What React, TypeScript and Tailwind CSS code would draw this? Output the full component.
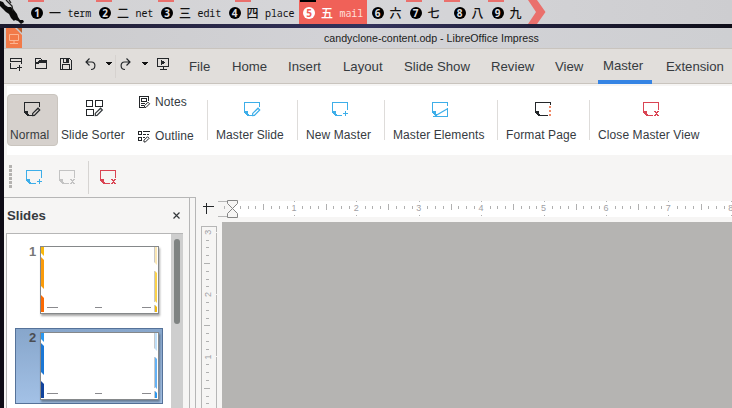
import React from "react";

type P = { className?: string };

const Pencil = ({ color = "currentColor" }: { color?: string }) => (
  <path d="M8.7 13.6V11.4L14 6.200L15.700 7.900L10.400 13.400Z" fill="none" stroke={color} strokeWidth="1.25" shapeRendering="auto" />
);

function SlideIcon({ kind, className = "" }: P & { kind: "edit" | "plus" | "x" | "elements" | "format" }) {
  return (
    <svg className={"block shrink-0 " + className} width="17" height="15" viewBox="0 0 17 15" shapeRendering="crispEdges" fill="currentColor">
      <path d="M0 0H16V1H0ZM0 0H1V11H0Z" />
      <path d="M0 9H4V12H5V14H3V13H2V12H1V11H0Z" />
      {kind !== "elements" && <rect x="5" y="13" width={kind === "format" ? 8 : 3.5} height="1" />}
      {kind === "edit" && (<><rect x="15" y="0" width="1" height="5" /><Pencil /></>)}
      {kind === "plus" && (<><path d="M15 0H16V8H15ZM5 13H10V14H5Z" /><path d="M13 9H14V14H13ZM11 11H16V12H11Z" /></>)}
      {kind === "x" && (<><path d="M15 0H16V8H15ZM5 13H10V14H5Z" /><path d="M11 9H13V10H14V9H16V10H15V11H14V12H15V13H16V14H14V13H13V14H11V13H12V12H13V11H12V10H11Z" /></>)}
      {kind === "elements" && (<><path d="M15 0H16V4H15ZM15 6H16V15H15ZM1 14H16V15H1Z" /><path d="M3 14L15.500 6.800" fill="none" stroke="currentColor" strokeWidth="1.200" shapeRendering="auto" /></>)}
      {kind === "format" && (<><rect x="15" y="0" width="1" height="3" /><path fill="#f08a68" d="M14 4H16V6H14ZM14 8H16V10H14ZM14 12H16V14H14Z" /></>)}
    </svg>
  );
}

function SorterIcon() {
  return (
    <svg className="ml-[25px] block" width="18" height="17" viewBox="0 0 18 17" fill="none" stroke="#232629" shapeRendering="crispEdges">
      <path d="M.5 .5H6.500V6.500H.5ZM9.500 .5H16.500V6.500H9.500ZM.5 9.500H7.500V15.500H.5Z" />
      <g transform="translate(.6 2)"><Pencil /></g>
    </svg>
  );
}

function NotesIcon() {
  return (
    <svg className="ml-[1px] block shrink-0" width="12" height="13" viewBox="0 0 12 13" fill="none" stroke="#232629" shapeRendering="crispEdges">
      <path d="M5 11.500H.5V.5H9.500V5M2.500 2.500H7.500V5.500H2.500ZM2 7.500H6M2 9.500H5" />
      <path d="M5.500 11.500V9.700L9 6.200L10.600 7.800L7 11.400Z" shapeRendering="auto" />
    </svg>
  );
}

function OutlineIcon() {
  return (
    <svg className="block shrink-0" width="13" height="13" viewBox="0 0 13 13" fill="none" stroke="#232629" shapeRendering="crispEdges">
      <path d="M.5 1.500H3.500V4.500H.5ZM.5 7.500H3.500V10.500H.5ZM5 1.500H12M5 4.500H8M9 4.500H11M5 7.500H7" />
      <path d="M6 12V10.200L9.500 6.700L11.100 8.300L7.500 11.900Z" shapeRendering="auto" />
    </svg>
  );
}

function QuickIcons() {
  return (
    <svg className="block h-[34px] w-[178px] shrink-0" viewBox="4 49 178 34" fill="none" stroke="#232629" shapeRendering="crispEdges">
      <path d="M10.500 58.500H21.500V61.500H10.500ZM10.500 63V68.500H17M21.500 62V64M19.500 65V71M17 67.500H22" />
      <path d="M35.500 58.500H40.500L42.500 60.500H46.500V68.500H35.500Z" />
      <path d="M36 62H38L39 60H47V63H39L38 64H36Z" fill="#232629" stroke="none" />
      <path d="M60.500 58.500H69.500L71.500 60.500V69.500H60.500ZM62.500 69V64.500H69.500V69M63.500 59V62.500H68.500V59" />
      <path d="M66 59H68V62H66Z" fill="#232629" stroke="none" />
      <g shapeRendering="auto" strokeWidth="1.150">
        <path d="M89.500 58.500L86 62L89.500 65.500M86.500 62H91.500C96.200 62 96 69.500 91 69.500" />
        <path d="M126.500 58.500L130 62L126.500 65.500M129.500 62H124.500C119.800 62 120 69.500 125 69.500" />
      </g>
      <path d="M106 62H112V63H111V64H110V65H108V64H107V63H106ZM142 62H148V63H147V64H146V65H144V64H143V63H142Z" fill="#111" stroke="none" />
      <path d="M115.500 55V78" stroke="#d6d2cf" />
      <path d="M157.500 58.500H168.500V66.500H157.500ZM163 67V69M160 69.500H167" />
      <path d="M161 60L165.500 62.500L161 65Z" fill="#232629" stroke="none" />
    </svg>
  );
}

const spaces = [
  { n: 1, k: "一", name: "term", cls: "w-[68px]" },
  { n: 2, k: "二", name: "net", cls: "w-[62px]" },
  { n: 3, k: "三", name: "edit", cls: "w-[67.500px]" },
  { n: 4, k: "四", name: "place", cls: "w-[70.500px]" },
];
const restSpaces = [
  { n: 6, k: "六", cls: "w-[38px]" },
  { n: 7, k: "七", cls: "w-[44px]" },
  { n: 8, k: "八", cls: "w-[38px]" },
  { n: 9, k: "九", cls: "w-[30px]" },
];

function Space({ n, k, name, cls, active }: { n: number; k: string; name?: string; cls: string; active?: boolean }) {
  return (
    <div className={"flex h-[24px] shrink-0 items-center pt-[2px] text-[10px] " + cls + (active ? " bg-[#f06158] text-white" : " text-[#111]")}>
      <span className={"flex h-[12px] w-[12px] shrink-0 items-center justify-center rounded-full font-['Open_Sans',sans-serif] text-[10px] leading-none font-bold " + (active ? "bg-white text-[#f06158]" : "bg-black text-[#dedee0]")}>{n}</span>
      <span className="ml-[6px] w-[13px] shrink-0 font-['Noto_Sans_CJK_JP',sans-serif] text-[12px] leading-none font-medium">{k}</span>
      {name && <span className={"ml-[5.500px] font-['Noto_Sans_Mono','DejaVu_Sans_Mono',monospace] text-[10px] tracking-[-0.120px]" + (active ? " text-[#ffe0dc]" : "")}>{name}</span>}
    </div>
  );
}

const tabs = [
  { t: "File", cls: "ml-[7px] w-[43px]" },
  { t: "Home", cls: "w-[56px]" },
  { t: "Insert", cls: "w-[55px]" },
  { t: "Layout", cls: "w-[61px]" },
  { t: "Slide Show", cls: "w-[87px]" },
  { t: "Review", cls: "w-[64px]" },
  { t: "View", cls: "w-[43px]" },
];

function Divider() {
  return <div className="mt-[14px] h-[40px] w-px shrink-0 bg-[#dedcda]" />;
}

function Command({ label, kind, cls, icon }: { label: string; kind: "edit" | "plus" | "x" | "elements" | "format"; cls: string; icon: string }) {
  return (
    <div className={"shrink-0 pt-[16px] pl-[8px] whitespace-nowrap " + cls}>
      <SlideIcon kind={kind} className={icon} />
      <div className="mt-[11px] text-[12px] leading-[14px] tracking-[0.100px]">{label}</div>
    </div>
  );
}

function Thumb({ c }: { c: string[] }) {
  return (
    <svg className="block shadow-[1px_2px_2px_rgba(0,0,0,0.35)]" width="119" height="68" viewBox="0 0 119 68">
      <rect x=".5" y=".5" width="118" height="67" fill="#fff" stroke="#85888a" />
      <path d="M1 1H4V10L1 7Z" fill={c[0]} />
      <path d="M1 11L4 14V43L1 40Z" fill={c[1]} />
      <path d="M1 49L4 52V66H1Z" fill={c[2]} />
      <path d="M115 1H117V19L115 17Z" fill={c[3]} />
      <path d="M114 1H115V17L114 16ZM114 25H115V56H114ZM114 59H115V66H114Z" fill="#c8c8ca" />
      <path d="M115 25L117 27V57L115 55Z" fill={c[4]} />
      <path d="M115 59L117 61V66H115Z" fill={c[5]} />
      <path d="M7 61.500H18M55 61.500H62M102 61.500H111" stroke="#8a8a8e" />
    </svg>
  );
}

function HRuler() {
  const ticks = Array.from({ length: 65 }, (_, i) => i).filter((i) => i % 8 !== 0);
  return (
    <svg className="block h-[25px] w-[536px]" viewBox="196 197 536 25" shapeRendering="crispEdges">
      <path d="M232 201H732V217H232Z" fill="#fff" />
      <path d="M218 201H236V202H218ZM218 216H236V217H218ZM224 206H225V209H224Z" fill="#b6b6b6" />
      <path d="M203 206H214V207H203ZM206 203H207V214H206Z" fill="#232629" />
      {ticks.map((i) => {
        const x = Math.floor(232.400 + i * 7.810);
        return <rect key={i} x={x} y={i % 4 === 0 ? 204 : 206} width="1" height={i % 4 === 0 ? 6 : 3} fill="#b0b0b0" />;
      })}
      {[1, 2, 3, 4, 5, 6, 7, 8].map((n) => (
        <g key={n}>
          <path d={`M${Math.floor(232 + n * 62.400)} 201h1v1h-1ZM${Math.floor(232 + n * 62.400)} 215h1v1h-1Z`} fill="#b0b0b0" />
          <text x={231.500 + n * 62.400} y="211" textAnchor="middle" fontSize="9" fill="#a0a0a4" fontFamily="Liberation Sans, sans-serif">{n}</text>
        </g>
      ))}
      <path d="M227.500 200.500H237.500V203.500L232.500 208.500L227.500 203.500ZM232.500 208.500L237.500 213.500V217.500H227.500V213.500Z" fill="#f6f5f4" stroke="#858585" shapeRendering="auto" />
    </svg>
  );
}

function VRuler() {
  const ticks = Array.from({ length: 24 }, (_, i) => i + 1).filter((i) => i % 8 !== 0);
  return (
    <svg className="block h-[186px] w-[26px] shrink-0" viewBox="196 222 26 186" shapeRendering="crispEdges">
      <path d="M201 226H217V227H201ZM201 226H202V408H201ZM216 226H217V408H216Z" fill="#b6b6b6" />
      {ticks.map((i) => (
        <rect key={i} x={i % 4 === 0 ? 204 : 206} y={Math.floor(232.200 + i * 7.800)} width={i % 4 === 0 ? 6 : 3} height="1" fill="#b0b0b0" />
      ))}
      {[3, 2, 1].map((n, i) => (
        <g key={n}>
          <rect x="215" y={Math.floor(232 + i * 62.400)} width="2" height="1" fill="#f6f5f4" />
          <text transform={`translate(211 ${232.200 + i * 62.400}) rotate(-90)`} textAnchor="middle" fontSize="9" fill="#a0a0a4" fontFamily="Liberation Sans, sans-serif">{n}</text>
        </g>
      ))}
    </svg>
  );
}

export default function App() {
  return (
    <div className="flex h-[408px] w-[732px] flex-col overflow-hidden bg-[#0e0c16] font-['Liberation_Sans',Arial,sans-serif] text-[#363b3f]">
      <header className="relative flex h-[24px] shrink-0 bg-gradient-to-r from-[#d2d2d4] via-[#d6d6d9] to-[#cdcdd0]">
        <svg className="block shrink-0" width="31" height="24" viewBox="0 0 31 24">
          <path d="M0 1L3 2L5 5L8 7L11 7L14 10L17 14L18 17L20 20H23L24 22L21 24L18 21L15 20L14 21L11 18L9 14L6 12L3 9L0 6Z" fill="#0b0b0b" />
          <path d="M6 0L9 3L12 6L13 11M9 0L11 3" fill="none" stroke="#222" strokeWidth="1.300" />
        </svg>
        {spaces.map((s) => <Space key={s.n} {...s} />)}
        <Space n={5} k="五" name="mail" cls="w-[68px] pl-[4px]" active />
        <div className="w-[4.500px] shrink-0" />
        {restSpaces.map((s) => <Space key={s.n} {...s} />)}
        <svg className="ml-[6px] block shrink-0" width="18" height="24" viewBox="0 0 18 24">
          <path d="M0 0H9L17.500 12L9 24H0L8 12Z" fill="#ea706c" />
        </svg>
        <svg className="absolute top-0 left-0" width="732" height="2" viewBox="0 0 732 2">
          <path d="M28 0H44V2H28ZM96 0H112V2H96ZM158 0H174V2H158ZM235 0H251V2H235ZM406 0H422V2H406ZM444 0H460V2H444ZM488 0H504V2H488Z" fill="#ea706c" />
          <path d="M300 0H316V2H300Z" fill="#000" />
        </svg>
      </header>
      <div className="h-[4px] shrink-0 bg-gradient-to-r from-[#1c1a2d] via-[#33325c] to-[#0e0d18]" />

      <div className="ml-[4px] flex min-h-0 flex-1 flex-col bg-[#f6f5f4]">
        <div className="flex h-[20px] shrink-0 bg-gradient-to-r from-[#cbcbcd] via-[#d3d3d7] to-[#cecfd2]">
          <svg className="ml-[2px] block shrink-0" width="16" height="20" viewBox="0 0 16 20">
            <path d="M0 0H9L16 7V20H0Z" fill="#f27a48" />
            <path d="M11 0H16V5Z" fill="#bd622f" />
            <path d="M3.500 6.500H12.500V12.500H3.500ZM8 13V15M4 15.500H12" fill="none" stroke="#fbb592" />
          </svg>
          <div className="ml-[302px] pt-[4px] text-[10.670px] leading-[13px] whitespace-nowrap text-[#1c1c1c]">candyclone-content.odp - LibreOffice Impress</div>
        </div>

        <nav className="flex h-[36px] shrink-0 border-y border-[#c9c4be] bg-[#e1dedb] text-[13.200px] leading-[16px] whitespace-nowrap">
          <QuickIcons />
          {tabs.map((t) => <div key={t.t} className={"shrink-0 pt-[10px] " + t.cls}>{t.t}</div>)}
          <div className="h-[35px] w-[54px] shrink-0 border-b-4 border-[#3584e4] pt-[9px] pl-[5px] text-left tracking-[-0.050px]">Master</div>
          <div className="shrink-0 pt-[10px] pl-[14px]">Extension</div>
        </nav>

        <section className="mt-[2px] ml-[3px] flex h-[69px] shrink-0 bg-white">
          <div className="mt-[8px] h-[52px] w-[51px] shrink-0 rounded-[4px] border border-[#cac5bf] bg-[#d6d1cd] pt-[7px] text-[#232629]">
            <SlideIcon kind="edit" className="ml-[16px]" />
            <div className="mt-[11px] pl-[2px] text-[12px] leading-[14px] tracking-[0.100px] text-[#363b3f]">Normal</div>
          </div>
          <div className="w-[71px] shrink-0 pt-[14px] pl-[3px]">
            <SorterIcon />
            <div className="mt-[11px] text-[12px] leading-[14px] whitespace-nowrap tracking-[0.100px]">Slide Sorter</div>
          </div>
          <div className="w-[71px] shrink-0 pt-[9px] pl-[9px] text-[12px] leading-[14px] tracking-[0.100px]">
            <div className="flex items-center gap-[4px]"><NotesIcon />Notes</div>
            <div className="mt-[20px] flex items-center gap-[4px]"><OutlineIcon />Outline</div>
          </div>
          <div className="ml-[7px]" />
          <Divider />
          <Command label="Master Slide" kind="edit" cls="w-[89px]" icon="ml-[28px] text-[#3daee9]" />
          <Divider />
          <Command label="New Master" kind="plus" cls="w-[86px]" icon="ml-[26px] text-[#3daee9]" />
          <Divider />
          <Command label="Master Elements" kind="elements" cls="w-[112px]" icon="ml-[39px] text-[#3daee9]" />
          <Divider />
          <Command label="Format Page" kind="format" cls="w-[91px]" icon="ml-[29px] text-[#232629]" />
          <Divider />
          <Command label="Close Master View" kind="x" cls="w-[140px]" icon="ml-[45px] text-[#da4453]" />
        </section>

        <section className="flex h-[42px] shrink-0 items-start">
          <svg className="mt-[10px] ml-[5px] block" width="3" height="23" viewBox="0 0 3 23" shapeRendering="crispEdges">
            <path d="M0 0H3V3H0ZM0 4H3V7H0ZM0 8H3V11H0ZM0 12H3V15H0ZM0 16H3V19H0ZM0 20H3V23H0Z" fill="#b4b2b0" />
          </svg>
          <SlideIcon kind="plus" className="mt-[15px] ml-[14px] text-[#3daee9]" />
          <SlideIcon kind="x" className="mt-[15px] ml-[16px] text-[#c3c3c3]" />
          <div className="mt-[6px] ml-[12px] h-[33px] w-px bg-[#d6d4d2]" />
          <SlideIcon kind="x" className="mt-[15px] ml-[11px] text-[#da4453]" />
        </section>

        <main className="flex min-h-0 flex-1">
          <aside className="flex w-[186px] shrink-0 flex-col border-t border-r border-[#b6b6b6]">
            <div className="flex h-[35px] shrink-0 items-center justify-between pr-[9px] pl-[3px] text-[13.200px] font-bold">
              <span>Slides</span>
              <svg width="7" height="7" viewBox="0 0 7 7" fill="none" stroke="#34383b" strokeWidth="1.200"><path d="M.5 .5L6.500 6.500M6.500 .5L.5 6.500" /></svg>
            </div>
            <div className="ml-[2px] flex min-h-0 w-[177px] flex-1 border-t border-l border-[#b6b6b6] bg-white">
              <div className="flex w-[164px] shrink-0 flex-col pl-[8px] text-[13px] leading-[12px] font-bold">
                <div className="mt-[12px] flex h-[68px] items-start">
                  <span className="w-[25px] shrink-0 pl-[14px] text-[#777]">1</span>
                  <Thumb c={["#f9b80c", "#fa9b0a", "#fb6a04", "#fbe7b4", "#fbd24a", "#f2b90d"]} />
                </div>
                <div className="mt-[14px] flex h-[76px] w-[148px] shrink-0 items-start border border-[#557299] bg-gradient-to-b from-[#87a6cb] to-[#a3c1e6] pt-[3px]">
                  <span className="w-[24px] shrink-0 pl-[13px] text-[#4b4d52]">2</span>
                  <Thumb c={["#2b98ef", "#1b77d5", "#11439c", "#bfe0fa", "#64b2f5", "#2b98ef"]} />
                </div>
              </div>
              <div className="w-[12px] shrink-0 bg-[#cecece] pt-[5px] pl-[3px]">
                <div className="h-[85px] w-[6px] rounded-[3px] bg-[#7f8382]" />
              </div>
            </div>
          </aside>
          <div className="w-[6px] shrink-0 border-t border-r border-[#b6b6b6]" />
          <div className="flex min-w-0 flex-1 flex-col">
            <HRuler />
            <div className="flex min-h-0 flex-1">
              <VRuler />
              <div className="flex-1 bg-[#b5b4b2]" />
            </div>
          </div>
        </main>
      </div>
    </div>
  );
}
